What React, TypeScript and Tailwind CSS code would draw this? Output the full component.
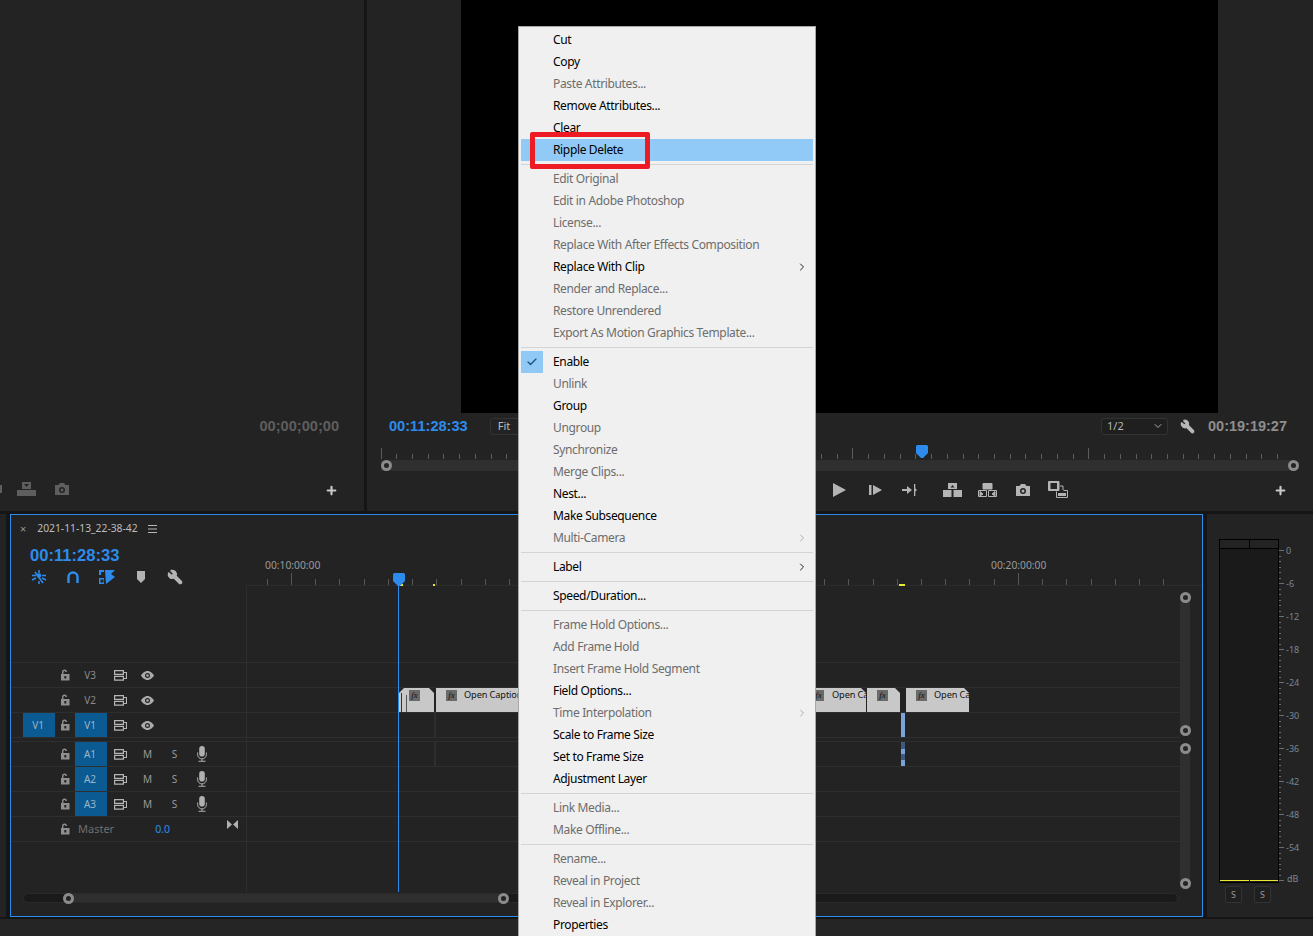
import { Wrench, Plus, ChevronDown, ChevronRight, Check } from "lucide-react";

const UI_FONT = "font-['Noto_Sans',sans-serif]";

type MenuEntry = { label?: string; off?: boolean; sub?: boolean; active?: boolean; checked?: boolean; sep?: boolean };

const menu: MenuEntry[] = [
    { label: "Cut" },
    { label: "Copy" },
    { label: "Paste Attributes...", off: true },
    { label: "Remove Attributes..." },
    { label: "Clear" },
    { label: "Ripple Delete", active: true },
    { sep: true },
    { label: "Edit Original", off: true },
    { label: "Edit in Adobe Photoshop", off: true },
    { label: "License...", off: true },
    { label: "Replace With After Effects Composition", off: true },
    { label: "Replace With Clip", sub: true },
    { label: "Render and Replace...", off: true },
    { label: "Restore Unrendered", off: true },
    { label: "Export As Motion Graphics Template...", off: true },
    { sep: true },
    { label: "Enable", checked: true },
    { label: "Unlink", off: true },
    { label: "Group" },
    { label: "Ungroup", off: true },
    { label: "Synchronize", off: true },
    { label: "Merge Clips...", off: true },
    { label: "Nest..." },
    { label: "Make Subsequence" },
    { label: "Multi-Camera", off: true, sub: true },
    { sep: true },
    { label: "Label", sub: true },
    { sep: true },
    { label: "Speed/Duration..." },
    { sep: true },
    { label: "Frame Hold Options...", off: true },
    { label: "Add Frame Hold", off: true },
    { label: "Insert Frame Hold Segment", off: true },
    { label: "Field Options..." },
    { label: "Time Interpolation", off: true, sub: true },
    { label: "Scale to Frame Size" },
    { label: "Set to Frame Size" },
    { label: "Adjustment Layer" },
    { sep: true },
    { label: "Link Media...", off: true },
    { label: "Make Offline...", off: true },
    { sep: true },
    { label: "Rename...", off: true },
    { label: "Reveal in Project", off: true },
    { label: "Reveal in Explorer...", off: true },
    { label: "Properties" },
];

const Lock = () => (
    <svg width="10" height="12" viewBox="0 0 10 12" className="text-[#8f8f8f]" fill="currentColor">
        <path d="M2 5V3a2.500 2.500 0 0 1 5 0H5.600a1.100 1.100 0 0 0-2.200 0v2H9.500v6.500H1V5z M4.300 7v2.500h2V7z" fillRule="evenodd" />
    </svg>
);

const SyncIcon = () => (
    <svg width="13" height="11" viewBox="0 0 13 11" fill="none" stroke="#b5b5b5" strokeWidth="1.200">
        <path d="M.6.6h8.800v3.800H.6z M.6 6.400h8.800v3.800H.6z M9.500 2.500h3v6h-3" />
    </svg>
);

const Eye = () => (
    <svg width="13" height="9" viewBox="0 0 13 9" fill="#ababab">
        <path d="M6.500 0C9.500 0 12 2.500 13 4.500 12 6.500 9.500 9 6.500 9S1 6.500 0 4.500C1 2.500 3.500 0 6.500 0zm0 2a2.500 2.500 0 1 0 0 5 2.500 2.500 0 0 0 0-5z" fillRule="evenodd" />
        <circle cx="6.500" cy="4.500" r="1.300" />
    </svg>
);

const Mic = () => (
    <svg width="10" height="16" viewBox="0 0 10 16" fill="#b0b0b0">
        <rect x="2.200" y="0" width="5.600" height="10.500" rx="2.800" />
        <path d="M.6 6.500v2a4.400 4.400 0 0 0 8.800 0v-2" fill="none" stroke="#b0b0b0" strokeWidth="1" />
        <path d="M4.500 13h1v1.800h-1z M1.500 14.800h7v1h-7z" />
    </svg>
);

const Fx = () => (
    <span className="flex items-center justify-center w-[11px] h-[11px] bg-[#6a6a6a] text-[9px] leading-none italic font-['Liberation_Serif',serif] text-[#111]">
        fx
    </span>
);

const Handle = ({ className }: { className: string }) => (
    <span className={`absolute w-[11px] h-[11px] rounded-full border-[3px] border-[#8b8b8b] bg-[#242424] ${className}`} />
);

const Timecode = ({ value, className }: { value: string; className: string }) => (
    <span className={`font-['Liberation_Sans',sans-serif] font-bold leading-none ${className}`}>{value}</span>
);

// program monitor ruler: major tick every 236px, 15 minor in between
const MonitorRuler = () => (
    <svg width="914" height="14" className="block ml-[13px]" stroke="#5b5b5b">
        {Array.from({ length: 58 }, (_, i) => {
            const x = Math.round(0.5 + i * 15.73) + 0.5;
            return <line key={i} x1={x} x2={x} y1={i % 15 === 0 ? 2 : 8} y2="13" />;
        })}
    </svg>
);

const MonitorScroll = () => (
    <div className="relative ml-[14px] w-[912px] h-[11px] bg-[#2f2f2f]">
        <Handle className="left-[0px] top-[0px]" />
        <Handle className="right-[-6px] top-[0px]" />
    </div>
);

const Playhead = ({ className }: { className: string }) => (
    <svg width="12" height="13" viewBox="0 0 12 13" className={`absolute ${className}`}>
        <path d="M1.500 0h9A1.500 1.500 0 0 1 12 1.500V8l-5 5H5L0 8V1.500A1.500 1.500 0 0 1 1.500 0z" fill="#2d8ceb" />
    </svg>
);

const Transport = () => (
    <div className="relative h-[22px] mt-[8px] text-[#b4b4b4]">
        {/* left of the open menu is hidden, these sit past it */}
        <div className="absolute left-[466px] top-[2px] flex items-center">
            <svg width="13" height="14" viewBox="0 0 13 14" fill="#b4b4b4"><path d="M0 0l13 7-13 7z" /></svg>
            <svg width="13" height="10" viewBox="0 0 13 10" fill="#b4b4b4" className="ml-[23px]"><path d="M0 0h2.500v10H0z M4 0l9 5-9 5z" /></svg>
            <svg width="15" height="14" viewBox="0 0 15 14" fill="#b4b4b4" className="ml-[20px]"><path d="M0 6h5V3l5 4-5 4V8H0z" /><path d="M12 1h1.300v4.500L15 7l-1.700 1.500V13H12z" /></svg>
            <svg width="19" height="14" viewBox="0 0 19 14" fill="#b4b4b4" className="ml-[26px]"><path d="M5 0h9v6H5z M0 7h8.500v7H0z M10.500 7H19v7h-8.500z" /><path d="M9.500 2l2 2.500h-4z" fill="#242424" /></svg>
            <svg width="19" height="14" viewBox="0 0 19 14" fill="none" stroke="#b4b4b4" className="ml-[16px]"><path d="M5 .5h9v5.500H5z" fill="#b4b4b4" /><path d="M.5 7.500h8v6h-8z M10.500 7.500h8v6h-8z" /><path d="M2 8.500l3 2.500-3 2z M17 8.500l-3 2.500 3 2z" fill="#b4b4b4" /></svg>
            <svg width="14" height="12" viewBox="0 0 14 12" fill="#b4b4b4" className="ml-[19px]"><path d="M0 2h3.500L5 0h4l1.500 2H14v10H0zm7 2a3 3 0 1 0 0 6 3 3 0 0 0 0-6z" fillRule="evenodd" /><circle cx="7" cy="7" r="1.500" /></svg>
            <svg width="20" height="17" viewBox="0 0 20 17" fill="none" stroke="#b4b4b4" className="ml-[18px]"><path d="M.5.5h10.500v9H.5z" fill="#b4b4b4" /><path d="M2.500 2h6.500v6H2.500z" fill="#242424" stroke="none" /><path d="M12 5h3v4 M8.500 10.500v6H19.500v-7h-4" /><path d="M10 12h8v3h-8z" fill="#b4b4b4" stroke="none" /></svg>
        </div>
        <Plus size={13} strokeWidth={4} className="absolute right-[26px] top-[5px] text-[#c8c8c8]" />
    </div>
);

const MonitorLeft = () => (
    <div className="w-[364px] shrink-0 bg-[#232323]">
        <div className="h-[413px]" />
        <div className="h-[26px] flex items-center justify-end pr-[25px]">
            <Timecode value="00;00;00;00" className="text-[14.600px] text-[#5e5e5e]" />
        </div>
        <div className="h-[32px]" />
        <div className="relative h-[22px] mt-[8px]">
            <span className="absolute left-0 top-[6px] w-[2px] h-[8px] bg-[#5e5e5e]" />
            <svg width="19" height="14" viewBox="0 0 19 14" fill="#5e5e5e" className="absolute left-[17px] top-[3px]"><path d="M5 0h9v7H5z M0 8h19v6H0z" /><path d="M7 2h5L9.500 5z" fill="#232323" /></svg>
            <svg width="14" height="12" viewBox="0 0 14 12" fill="#5e5e5e" className="absolute left-[55px] top-[4px]"><path d="M0 2h3.500L5 0h4l1.500 2H14v10H0zm7 2a3 3 0 1 0 0 6 3 3 0 0 0 0-6z" fillRule="evenodd" /><circle cx="7" cy="7" r="1.500" /></svg>
            <Plus size={13} strokeWidth={4} className="absolute right-[26px] top-[5px] text-[#c8c8c8]" />
        </div>
    </div>
);

const MonitorRight = () => (
    <div className="flex-1 bg-[#232323]">
        <div className="h-[413px] ml-[94px] w-[757px] bg-black" />
        <div className={`h-[26px] flex items-center pl-[22px] pr-[26px] ${UI_FONT}`}>
            <Timecode value="00:11:28:33" className="text-[14.600px] text-[#2d8ceb]" />
            <span className="ml-[22px] w-[40px] h-[17px] border border-[#333] rounded-[3px] pl-[7px] text-[11px] leading-[14px] text-[#bdbdbd]">Fit</span>
            <div className="ml-auto flex items-center w-[67px] h-[17px] border border-[#333] rounded-[3px] bg-[#1f1f1f] pl-[5px] pr-[3px] text-[11px] text-[#b5b5b5]">
                1/2
                <ChevronDown size={12} className="ml-auto text-[#aaa]" />
            </div>
            <Wrench size={15} fill="currentColor" className="ml-[12px] -scale-x-100 text-[#b8b8b8]" />
            <Timecode value="00:19:19:27" className="ml-[13px] text-[14.500px] text-[#8e8e8e]" />
        </div>
        <div className="relative mt-[7px]">
            <MonitorRuler />
            <Playhead className="left-[549px] -top-[1px]" />
        </div>
        <MonitorScroll />
        <Transport />
    </div>
);

const ToolIcons = () => (
    <div className="flex items-center mt-[3px] ml-[20px] gap-[18px]">
        <svg width="16" height="16" viewBox="0 0 16 16" stroke="#2d8ceb" strokeWidth="1.500" fill="none">
            <path d="M8 1v3 M8 12v3 M1 6.500h4 M11 6.500h4 M1 11l4-2 M15 11l-4-2 M4 3l8 11" />
            <circle cx="8" cy="6.500" r="1.500" fill="#2d8ceb" />
        </svg>
        <svg width="16" height="15" viewBox="0 0 16 15" fill="none" stroke="#2d8ceb" strokeWidth="2.500">
            <path d="M3.500 13V7a4.500 4.500 0 0 1 9 0v6" />
        </svg>
        <svg width="16" height="14" viewBox="0 0 16 14" fill="#2d8ceb">
            <path d="M6 0h10L12 4l4 3-9 7z M0 0h5v2H2v3H0z M0 8h5v6H0z" />
            <path d="M1.500 9.500h3v3h-3z" fill="#232323" />
        </svg>
        <svg width="16" height="12" viewBox="0 0 10 12" fill="#b4b4b4">
            <path d="M1 0h8v8l-4 4-4-4z" />
        </svg>
        <Wrench size={16} fill="currentColor" className="-scale-x-100 text-[#b4b4b4]" />
    </div>
);

const TimelineRuler = () => (
    <div className="relative flex-1 h-full">
        <span className="absolute left-[18px] top-[17px] text-[10.300px] leading-[14px] text-[#9a9a9a]">00:10:00:00</span>
        <span className="absolute left-[744px] top-[17px] text-[10.300px] leading-[14px] text-[#9a9a9a]">00:20:00:00</span>
        <svg width="932" height="45" className="absolute left-0 top-0" stroke="#565656">
            {Array.from({ length: 38 }, (_, i) => {
                const x = Math.round(44 + (i - 1) * 24.23) + 0.5;
                const major = i === 1 || i === 31;
                return <line key={i} x1={x} x2={x} y1={major ? 32 : 38} y2="44" />;
            })}
        </svg>
        <div className="absolute left-0 right-0 bottom-0 h-px bg-[#2d2d2d]" />
        <span className="absolute left-[152px] bottom-0 w-[4px] h-[2px] bg-[#e8e832]" />
        <span className="absolute left-[186px] bottom-0 w-[2px] h-[2px] bg-[#e8e832]" />
        <span className="absolute left-[652px] bottom-0 w-[6px] h-[2px] bg-[#e8e832]" />
        <Playhead className="left-[146px] top-[32px]" />
    </div>
);

const rowLine = "border-t border-[#2e2e2e]";

type Track = { id: string; patch?: boolean };

const VideoHead = ({ id, patch }: Track) => (
    <div className={`h-[25px] flex items-center ${rowLine}`}>
        <div className="w-[12px]" />
        <div className={`w-[32px] h-[24px] flex items-center justify-center pr-[2px] text-[10px] ${patch ? "bg-[#0b5a91] text-[#9bb7cc]" : ""}`}>{patch ? "V1" : ""}</div>
        <div className="w-[20px] flex justify-center"><Lock /></div>
        <div className={`w-[32px] h-[24px] flex items-center justify-center pr-[2px] text-[10px] ${patch ? "bg-[#0b5a91] text-[#9bb7cc]" : "text-[#8a8a8a]"}`}>{id}</div>
        <div className="w-[27px] flex justify-center"><SyncIcon /></div>
        <div className="w-[27px] h-[24px] flex items-center justify-center"><Eye /></div>
    </div>
);

const AudioHead = ({ id }: Track) => (
    <div className={`h-[25px] flex items-center ${rowLine}`}>
        <div className="w-[44px]" />
        <div className="w-[20px] flex justify-center"><Lock /></div>
        <div className="w-[32px] h-[24px] flex items-center justify-center pr-[2px] text-[10px] bg-[#0b5a91] text-[#9bb7cc]">{id}</div>
        <div className="w-[27px] flex justify-center"><SyncIcon /></div>
        <div className="w-[27px] text-center text-[10px] text-[#9a9a9a]">M</div>
        <div className="w-[27px] text-center text-[10px] text-[#9a9a9a]">S</div>
        <div className="w-[27px] flex justify-center"><Mic /></div>
    </div>
);

const TrackHeaders = () => (
    <div className={`w-[236px] shrink-0 border-r border-[#2e2e2e] ${UI_FONT}`}>
        <div className="h-[76px]" />
        <VideoHead id="V3" />
        <VideoHead id="V2" />
        <VideoHead id="V1" patch />
        <div className={`h-[4px] ${rowLine}`} />
        <AudioHead id="A1" />
        <AudioHead id="A2" />
        <AudioHead id="A3" />
        <div className={`relative h-[25px] flex items-center ${rowLine}`}>
            <div className="w-[44px]" />
            <div className="w-[20px] flex justify-center"><Lock /></div>
            <span className="ml-[3px] text-[11px] text-[#6e6e6e]">Master</span>
            <span className="ml-[41px] mt-[1px] text-[10.500px] text-[#2d8ceb]">0.0</span>
            <svg width="11" height="9" viewBox="0 0 11 9" fill="#b0b0b0" className="absolute left-[216px] top-[3px]"><path d="M0 0l5 4.500L0 9z M11 0L6 4.500 11 9z" /></svg>
        </div>
        <div className={rowLine} />
    </div>
);

type ClipProps = { left: number; width: number; fxAt?: number; title?: string; titleAt?: number; trim?: boolean };

const Clip = ({ left, width, fxAt = 10, title, titleAt = 28, trim }: ClipProps) => (
    <div className="absolute top-0 h-[24px] bg-[#c8c8c8] overflow-hidden" style={{ left, width }}>
        <span className="absolute top-[2px]" style={{ left: fxAt }}><Fx /></span>
        {title && (
            <span className={`absolute top-0 text-[9.200px] tracking-[-0.1px] leading-[13px] whitespace-nowrap text-[#111] ${UI_FONT}`} style={{ left: titleAt }}>
                {title}
            </span>
        )}
        {trim && (
            <>
                <span className="absolute left-[2px] top-[5px] bottom-0 w-px bg-[#333]" />
                <span className="absolute left-[7px] top-[7px] bottom-0 w-px bg-[#555]" />
                <span className="absolute left-0 top-0 w-0 h-0 border-r-[5px] border-r-transparent border-t-[5px] border-t-[#242424]" />
            </>
        )}
        <span className="absolute right-0 top-0 w-0 h-0 border-l-[5px] border-l-transparent border-t-[5px] border-t-[#242424]" />
    </div>
);

const TrackLanes = () => (
    <div className="relative w-[933px] shrink-0">
        <div className="h-[76px]" />
        <div className={`h-[25px] ${rowLine}`} />
        <div className={`relative h-[25px] ${rowLine}`}>
            <Clip left={152} width={35} fxAt={10} trim />
            <Clip left={189} width={370} title="Open Captions" />
            <Clip left={558} width={61} fxAt={8} title="Open Ca" titleAt={27} />
            <Clip left={620} width={33} fxAt={10} />
            <Clip left={659} width={63} fxAt={10} title="Open Ca" titleAt={28} />
        </div>
        <div className={`relative h-[25px] ${rowLine}`}>
            <span className="absolute left-[187px] top-0 w-[2px] h-full bg-[#2e2e2e]" />
            <span className="absolute left-[654px] top-0 w-[4px] h-[24px] bg-[#7ba3d8]" />
        </div>
        <div className={`h-[4px] ${rowLine}`} />
        <div className={`relative h-[25px] ${rowLine}`}>
            <span className="absolute left-[187px] top-0 w-[2px] h-full bg-[#2e2e2e]" />
            <span className="absolute left-[654px] top-0 w-[4px] h-[24px] bg-[#3f5a80]" />
            <span className="absolute left-[654px] top-[7px] w-[4px] h-[5px] bg-[#7ba3d8]" />
            <span className="absolute left-[654px] top-[18px] w-[4px] h-[6px] bg-[#7ba3d8]" />
        </div>
        <div className={`h-[25px] ${rowLine}`} />
        <div className={`h-[25px] ${rowLine}`} />
        <div className={`h-[25px] ${rowLine}`} />
        <div className={rowLine} />
        {/* playhead line */}
        <span className="absolute left-[151px] top-0 bottom-0 w-px bg-[#2d8ceb]" />
    </div>
);

const VerticalScroll = () => (
    <div className="w-[10px] shrink-0 flex flex-col">
        <div className="relative mt-[11px] h-[134px] bg-[#2f2f2f] w-full">
            <Handle className="-left-[0.5px] top-[-5px]" />
            <Handle className="-left-[0.5px] bottom-[-5px]" />
        </div>
        <div className="relative mt-[17px] h-[136px] bg-[#2f2f2f] w-full">
            <Handle className="-left-[0.5px] top-[-5px]" />
            <Handle className="-left-[0.5px] bottom-[-5px]" />
        </div>
    </div>
);

const Timeline = () => (
    <div className={`w-[1193px] h-full border border-[#2d8ceb] bg-[#232323] flex flex-col ${UI_FONT}`}>
        <div className="h-[26px] flex items-center pt-[1px]">
            <span className="ml-[9px] text-[11px] leading-none text-[#999]">×</span>
            <span className="ml-[11px] text-[10.300px] text-[#bdbdbd]">2021-11-13_22-38-42</span>
            <svg width="9" height="8" viewBox="0 0 9 8" fill="#b8b8b8" className="ml-[10px]"><path d="M0 0h9v1H0z M0 3.500h9v1H0z M0 7h9v1H0z" /></svg>
        </div>
        <div className="h-[45px] flex">
            <div className="w-[236px] shrink-0">
                <div className="ml-[19px] mt-[5px] h-[20px] flex items-center">
                    <Timecode value="00:11:28:33" className="text-[16.600px] text-[#2d8ceb]" />
                </div>
                <ToolIcons />
            </div>
            <TimelineRuler />
        </div>
        <div className="h-[306px] flex">
            <TrackHeaders />
            <TrackLanes />
            <VerticalScroll />
        </div>
        <div className="relative ml-[12px] mt-[1px] w-[1155px] h-[10px] rounded-full bg-[#1a1a1a] border border-[#2a2a2a]">
            <div className="absolute left-[45px] top-0 w-[435px] h-full bg-[#2f2f2f]" />
            <Handle className="left-[39px] -top-[1px]" />
            <Handle className="left-[474px] -top-[1px]" />
        </div>
    </div>
);

const dbLabels = ["0", "-6", "-12", "-18", "-24", "-30", "-36", "-42", "-48", "-54"];

const Meters = () => (
    <div className={`flex-1 h-full bg-[#232323] ${UI_FONT}`}>
        <div className="flex mt-[25px] ml-[12px]">
            <div className="w-[60px] h-[344px] border border-black bg-[#1a1a1a] flex flex-col">
                <div className="h-[9px] flex border-b border-black bg-[#232323]">
                    <div className="flex-1 border-r border-black" />
                    <div className="flex-1" />
                </div>
                <div className="mt-auto flex gap-px h-[1px] mb-[1px]">
                    <div className="flex-1 bg-[#e8e832]" />
                    <div className="flex-1 bg-[#e8e832]" />
                </div>
            </div>
            <div className="relative w-[30px] h-[344px]">
                <svg width="6" height="344" className="absolute left-0 top-0" stroke="#6e6e6e">
                    {Array.from({ length: 61 }, (_, i) => {
                        const y = Math.round(11 + i * 5.5) + 0.5;
                        return <line key={i} x1="0" x2={i % 6 === 0 ? 5 : 2} y1={y} y2={y} />;
                    })}
                </svg>
                {dbLabels.map((t, i) => (
                    <span key={t} className="absolute left-[7px] text-[9px] leading-[12px] text-[#7b8794]" style={{ top: 6 + i * 33 }}>{t}</span>
                ))}
                <span className="absolute left-[8px] top-[334px] text-[9px] leading-[12px] text-[#7b8794]">dB</span>
            </div>
        </div>
        <div className="flex ml-[18px] mt-[3px] gap-[12px]">
            <div className="w-[17px] h-[17px] border border-[#333] rounded-[2px] bg-[#1f1f1f] flex items-center justify-center text-[9px] text-[#9a9a9a]">S</div>
            <div className="w-[17px] h-[17px] border border-[#333] rounded-[2px] bg-[#1f1f1f] flex items-center justify-center text-[9px] text-[#9a9a9a]">S</div>
        </div>
    </div>
);

const ContextMenu = () => (
    <div className={`absolute left-[518px] top-[26px] w-[298px] bg-[#f0f0f0] border border-[#a8a8a8] pt-[2px] px-[2px] text-[12px] tracking-[-0.35px] ${UI_FONT}`}>
        {menu.map((m, i) =>
            m.sep ? (
                <div key={i} className="h-[7px] flex items-center">
                    <div className="w-full h-px bg-[#d4d4d4]" />
                </div>
            ) : (
                <div
                    key={i}
                    className={`relative h-[22px] flex items-center pl-[32px] whitespace-nowrap ${m.active ? "bg-[#91c9f7]" : ""} ${m.off ? "text-[#6d6d6d]" : "text-black"}`}
                >
                    {m.checked && (
                        <span className="absolute left-0 top-0 w-[22px] h-[22px] bg-[#90c8f6] flex items-center justify-center">
                            <Check size={12} strokeWidth={2.500} className="text-[#1b4f7a]" />
                        </span>
                    )}
                    {m.label}
                    {m.sub && <ChevronRight size={12} strokeWidth={m.off ? 1.500 : 2} className={`absolute right-[5px] ${m.off ? "text-[#999]" : "text-[#222]"}`} />}
                </div>
            ),
        )}
    </div>
);

const App = () => {
    return (
        <div className="relative w-[1313px] h-[936px] overflow-hidden bg-[#151515] flex flex-col">
            <div className="h-[511px] flex gap-[3px] shrink-0">
                <MonitorLeft />
                <MonitorRight />
            </div>
            <div className="h-[403px] mt-[3px] flex shrink-0">
                <div className="w-[6px] bg-[#232323]" />
                <div className="w-[4px]" />
                <Timeline />
                <div className="w-[4px]" />
                <Meters />
            </div>
            <div className="flex-1 mt-[2px] bg-[#252525]" />
            <ContextMenu />
            {/* red callout around Ripple Delete */}
            <div className="absolute left-[530px] top-[132px] w-[120px] h-[37px] border-[5px] border-[#ed1c24] rounded-[2px]" />
        </div>
    );
};

export default App;
